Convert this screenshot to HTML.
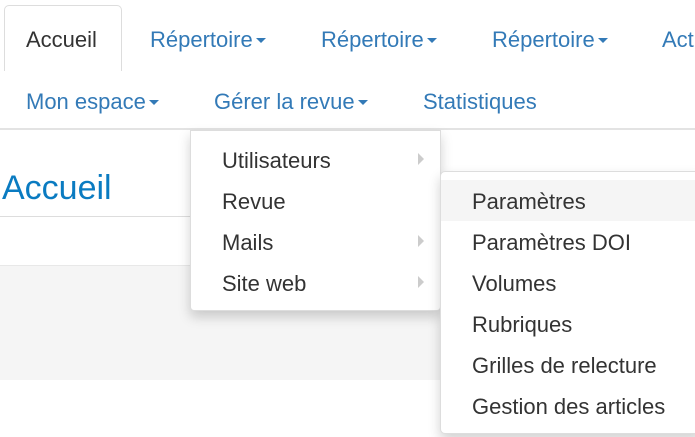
<!DOCTYPE html>
<html><head><meta charset="utf-8"><style>
*{margin:0;padding:0;box-sizing:border-box}
body{width:695px;height:437px;overflow:hidden;background:#fff;font-family:"Liberation Sans",sans-serif;font-size:22px;position:relative}
.a{position:absolute;white-space:nowrap;line-height:26px}
.l{color:#337ab7}
.t{color:#333}
.c{display:inline-block;width:0;height:0;border-left:5px solid transparent;border-right:5px solid transparent;border-top:5px solid #337ab7;vertical-align:middle;margin-left:3px;position:relative;top:-1px}
.ar{position:absolute;width:0;height:0;border-top:6px solid transparent;border-bottom:6px solid transparent;border-left:6px solid #ccc}
</style></head><body>
<div style="position:absolute;left:4px;top:5px;width:118px;height:66px;border:1px solid #ddd;border-bottom:none;border-radius:5px 5px 0 0;background:#fff"></div>
<div class="a t" style="left:26px;top:27px">Accueil</div>
<div class="a l" style="left:150px;top:27px">Répertoire<span class="c"></span></div>
<div class="a l" style="left:321px;top:27px">Répertoire<span class="c"></span></div>
<div class="a l" style="left:492px;top:27px">Répertoire<span class="c"></span></div>
<div class="a l" style="left:662px;top:27px">Act</div>
<div class="a l" style="left:26px;top:89px">Mon espace<span class="c"></span></div>
<div class="a l" style="left:214px;top:89px">Gérer la revue<span class="c"></span></div>
<div class="a l" style="left:423px;top:89px">Statistiques</div>
<div style="position:absolute;left:0;top:128px;width:695px;height:2px;background:#e3e3e3"></div>
<div class="a" style="left:2px;top:169px;font-size:34px;line-height:38px;color:#0a7bc1">Accueil</div>
<div style="position:absolute;left:0;top:216px;width:695px;height:1px;background:#ddd"></div>
<div style="position:absolute;left:0;top:265px;width:695px;height:115px;background:#f5f5f5;border-top:1px solid #e8e8e8"></div>
<div style="position:absolute;left:190px;top:130px;width:251px;height:181px;background:#fff;border:1px solid #ddd;border-radius:0 0 4px 4px;box-shadow:0 6px 12px rgba(0,0,0,.18)"></div>
<div class="a t" style="left:222px;top:148px">Utilisateurs</div>
<div class="a t" style="left:222px;top:189px">Revue</div>
<div class="a t" style="left:222px;top:230px">Mails</div>
<div class="a t" style="left:222px;top:271px">Site web</div>
<div class="ar" style="left:418px;top:153px"></div>
<div class="ar" style="left:418px;top:235px"></div>
<div class="ar" style="left:418px;top:276px"></div>
<div style="position:absolute;left:440px;top:171px;width:262px;height:263px;background:#fff;border:1px solid #ddd;border-radius:5px;box-shadow:0 6px 12px rgba(0,0,0,.18)"></div>
<div style="position:absolute;left:441px;top:180px;width:254px;height:41px;background:#f5f5f5"></div>
<div class="a t" style="left:472px;top:189px">Paramètres</div>
<div class="a t" style="left:472px;top:230px">Paramètres DOI</div>
<div class="a t" style="left:472px;top:271px">Volumes</div>
<div class="a t" style="left:472px;top:312px">Rubriques</div>
<div class="a t" style="left:472px;top:353px">Grilles de relecture</div>
<div class="a t" style="left:472px;top:394px">Gestion des articles</div>
</body></html>
